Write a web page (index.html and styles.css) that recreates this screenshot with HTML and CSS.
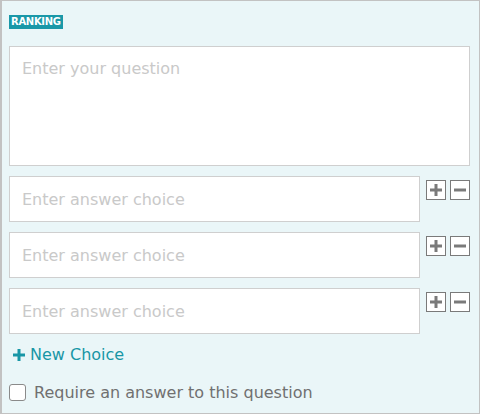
FILE: index.html
```html
<!DOCTYPE html>
<html>
<head>
<meta charset="utf-8">
<link rel="stylesheet" href="styles.css">
</head>
<body>
<div class="panel">
  <div class="badge-row"><span class="badge">RANKING</span></div>
  <div class="question">Enter your question</div>
  <div class="choices">
    <div class="choice">
      <div class="answer">Enter answer choice</div>
      <div class="btns">
        <span class="btn"><svg width="14" height="14" viewBox="0 0 14 14"><path d="M7 1v12M1 7h12" stroke="#7a7a7a" stroke-width="3"/></svg></span>
        <span class="btn"><svg width="14" height="14" viewBox="0 0 14 14"><path d="M1 7h12" stroke="#7a7a7a" stroke-width="3"/></svg></span>
      </div>
    </div>
    <div class="choice">
      <div class="answer">Enter answer choice</div>
      <div class="btns">
        <span class="btn"><svg width="14" height="14" viewBox="0 0 14 14"><path d="M7 1v12M1 7h12" stroke="#7a7a7a" stroke-width="3"/></svg></span>
        <span class="btn"><svg width="14" height="14" viewBox="0 0 14 14"><path d="M1 7h12" stroke="#7a7a7a" stroke-width="3"/></svg></span>
      </div>
    </div>
    <div class="choice">
      <div class="answer">Enter answer choice</div>
      <div class="btns">
        <span class="btn"><svg width="14" height="14" viewBox="0 0 14 14"><path d="M7 1v12M1 7h12" stroke="#7a7a7a" stroke-width="3"/></svg></span>
        <span class="btn"><svg width="14" height="14" viewBox="0 0 14 14"><path d="M1 7h12" stroke="#7a7a7a" stroke-width="3"/></svg></span>
      </div>
    </div>
  </div>
  <div class="new-choice"><svg width="12" height="12" viewBox="0 0 12 12"><path d="M6 0v12M0 6h12" stroke="#1896a6" stroke-width="3"/></svg><span>New Choice</span></div>
  <label class="require"><span class="box"></span><span>Require an answer to this question</span></label>
</div>
</body>
</html>
```

FILE: styles.css
```css
html, body {
  margin: 0;
  padding: 0;
}
body {
  width: 480px;
  height: 414px;
  font-family: "DejaVu Sans", sans-serif;
}
.panel {
  box-sizing: border-box;
  width: 480px;
  height: 414px;
  background: #eaf6f8;
  border: 1px solid #c2c2c2;
  border-left-width: 2px;
  padding: 14px 9px 0 7px;
}
.badge-row {
  height: 14px;
  display: flex;
}
.badge {
  background: #1a98a8;
  color: #fff;
  font-size: 10px;
  font-weight: bold;
  line-height: 14px;
  padding: 0 2px;
  letter-spacing: -0.3px;
}
.question {
  margin-top: 17px;
  box-sizing: border-box;
  height: 120px;
  background: #fff;
  border: 1px solid #cfcfcf;
  color: #c9c9c9;
  font-size: 16px;
  padding: 12px 12px;
}
.choices {
  margin-top: 10px;
  display: flex;
  flex-direction: column;
  gap: 10px;
}
.choice {
  display: flex;
  gap: 6px;
}
.answer {
  box-sizing: border-box;
  width: 411px;
  height: 46px;
  background: #fff;
  border: 1px solid #cfcfcf;
  color: #c9c9c9;
  font-size: 16px;
  padding: 0 12px;
  display: flex;
  align-items: center;
}
.btns {
  display: flex;
  gap: 4px;
  padding-top: 4px;
}
.btn {
  box-sizing: border-box;
  width: 20px;
  height: 20px;
  border: 1px solid #7a7a7a;
  background: #fff;
  display: flex;
  align-items: center;
  justify-content: center;
}
.new-choice {
  margin-top: 11px;
  margin-left: 4px;
  display: flex;
  align-items: center;
  gap: 5px;
  color: #1896a6;
  font-size: 16px;
}
.require {
  margin-top: 19px;
  display: flex;
  align-items: center;
  gap: 8px;
  color: #707070;
  font-size: 16px;
}
.box {
  box-sizing: border-box;
  width: 17px;
  height: 17px;
  border: 1px solid #8a8a8a;
  border-radius: 3px;
  background: #fff;
}
```
